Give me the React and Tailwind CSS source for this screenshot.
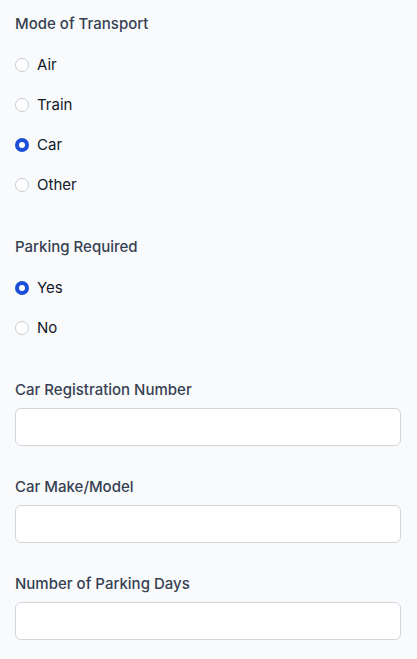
import React from "react";

function Radio({ label, checked }) {
  return (
    <label className="flex h-5 items-center gap-2">
      {checked ? (
        <span className="flex h-[14px] w-[14px] items-center justify-center rounded-full bg-[#1c4fd8]">
          <span className="h-[6px] w-[6px] rounded-full bg-white" />
        </span>
      ) : (
        <span className="h-[14px] w-[14px] rounded-full border-[1.5px] border-[#c8ccd3] bg-white" />
      )}
      <span className="text-[15px] text-gray-900">{label}</span>
    </label>
  );
}

function Field({ label, className }) {
  return (
    <div className={className}>
      <div className="text-[15px] font-medium leading-5 text-gray-700">{label}</div>
      <div className="mt-2 h-[38px] rounded-md border border-gray-300 bg-white" />
    </div>
  );
}

export default function App() {
  return (
    <div
      className="min-h-[659px] bg-gray-50 pl-[15px] pr-4 pt-[14px]"
      style={{ fontFamily: "Inter, 'Liberation Sans', sans-serif" }}
    >
      <div className="text-[15px] font-medium leading-5 text-gray-700">Mode of Transport</div>
      <div className="mt-[21px] flex flex-col gap-5">
        <Radio label="Air" />
        <Radio label="Train" />
        <Radio label="Car" checked />
        <Radio label="Other" />
      </div>

      <div className="mt-[42px] text-[15px] font-medium leading-5 text-gray-700">Parking Required</div>
      <div className="mt-[21px] flex flex-col gap-5">
        <Radio label="Yes" checked />
        <Radio label="No" />
      </div>

      <Field label="Car Registration Number" className="mt-[42px]" />
      <Field label="Car Make/Model" className="mt-[31px]" />
      <Field label="Number of Parking Days" className="mt-[31px]" />
    </div>
  );
}
